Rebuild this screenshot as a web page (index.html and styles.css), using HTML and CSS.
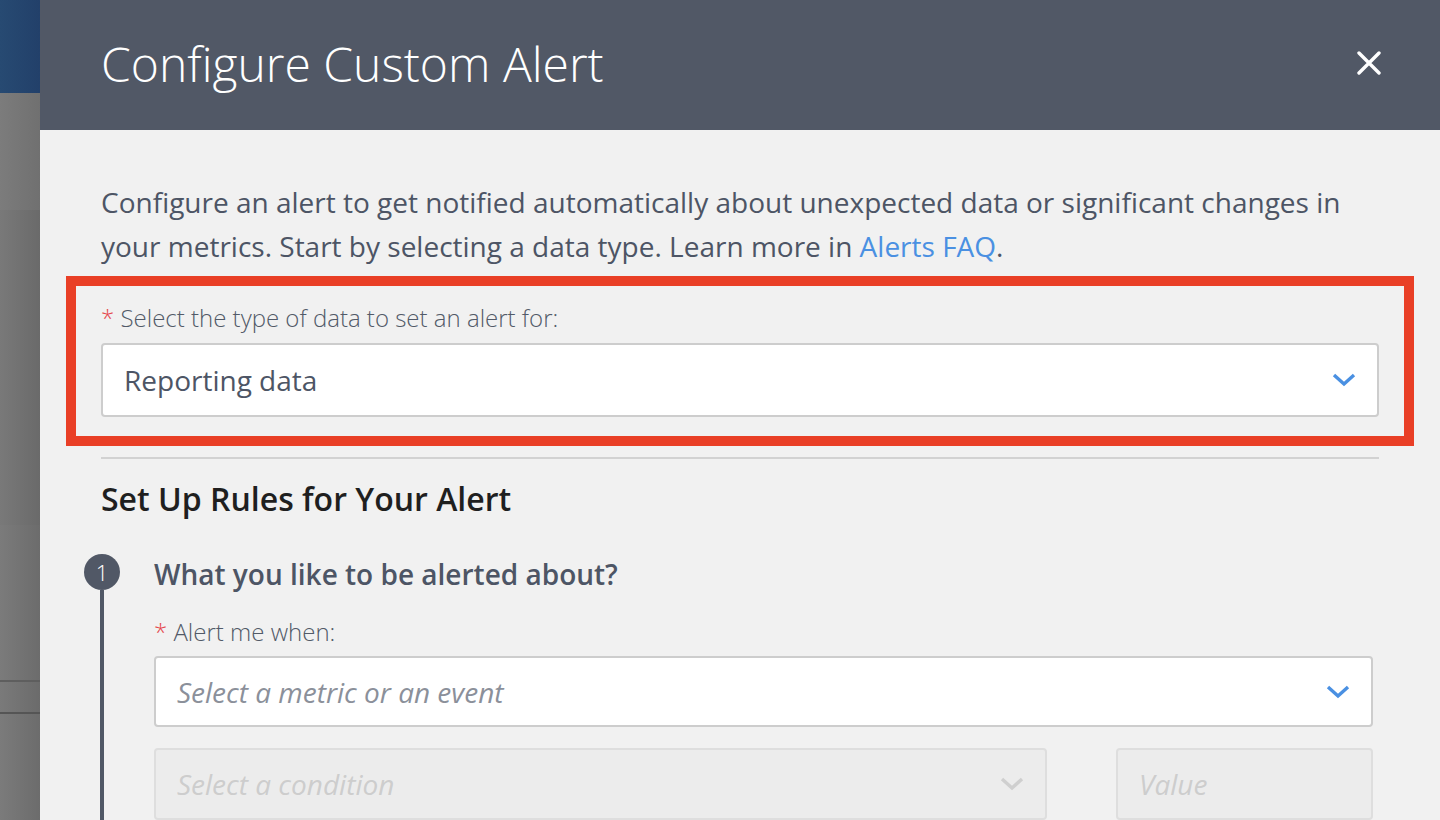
FILE: index.html
```html
<!DOCTYPE html>
<html>
<head>
<meta charset="utf-8">
<link rel="stylesheet" href="styles.css">
</head>
<body>
<div class="page">
  <div class="backdrop">
    <div class="bd-top"></div>
    <div class="bd-a"></div>
    <div class="bd-b"></div>
    <div class="bd-c"></div>
    <div class="bd-d"></div>
    <div class="bd-e"></div>
  </div>
  <div class="modal">
    <div class="modal-header">
      <h1 class="modal-title">Configure Custom Alert</h1>
      <button class="close-btn" aria-label="Close">
        <svg width="24" height="24" viewBox="0 0 24 24"><path d="M2 2 L22 22 M22 2 L2 22" stroke="#fff" stroke-width="3.4" stroke-linecap="round" fill="none"/></svg>
      </button>
    </div>
    <div class="modal-body">
      <p class="intro">Configure an alert to get notified automatically about unexpected data or significant changes in your metrics. Start by selecting a data type. Learn more in <a class="link" href="#">Alerts FAQ</a>.</p>

      <div class="field-group highlighted">
        <label class="field-label"><span class="req">*</span> Select the type of data to set an alert for:</label>
        <div class="select big">
          <span class="select-value">Reporting data</span>
          <svg class="chev" width="24" height="14" viewBox="0 0 24 14"><path d="M2 2 L12 11 L22 2" stroke="#4a90e2" stroke-width="3.4" fill="none"/></svg>
        </div>
      </div>

      <div class="divider"></div>

      <h2 class="section-title">Set Up Rules for Your Alert</h2>

      <div class="step">
        <div class="step-rail">
          <div class="step-num">1</div>
          <div class="step-line"></div>
        </div>
        <div class="step-content">
          <h3 class="step-title">What you like to be alerted about?</h3>
          <label class="field-label"><span class="req">*</span> Alert me when:</label>
          <div class="select metric">
            <span class="select-placeholder">Select a metric or an event</span>
            <svg class="chev" width="24" height="14" viewBox="0 0 24 14"><path d="M2 2 L12 11 L22 2" stroke="#4a90e2" stroke-width="3.4" fill="none"/></svg>
          </div>
          <div class="cond-row">
            <div class="select disabled cond">
              <span class="select-placeholder">Select a condition</span>
              <svg class="chev" width="24" height="14" viewBox="0 0 24 14"><path d="M2 2 L12 11 L22 2" stroke="#cfcfcf" stroke-width="3.4" fill="none"/></svg>
            </div>
            <div class="select disabled value">
              <span class="select-placeholder">Value</span>
            </div>
          </div>
        </div>
      </div>
    </div>
  </div>
</div>
</body>
</html>
```

FILE: styles.css
```css
* { box-sizing: border-box; }
html, body {
  margin: 0;
  padding: 0;
  width: 1440px;
  height: 820px;
  overflow: hidden;
  font-family: "Open Sans", "Liberation Sans", sans-serif;
}
.page {
  display: flex;
  width: 1440px;
  height: 820px;
}
.backdrop {
  width: 40px;
  flex: none;
  display: flex;
  flex-direction: column;
}
.bd-top { height: 93px; flex: none; background: linear-gradient(90deg, #274a72, #22406a); }
.bd-a { height: 117px; flex: none; background: linear-gradient(90deg, #7c7c7c, #707070); }
.bd-b { height: 315px; flex: none; background: linear-gradient(90deg, #797979, #6a6a6a); }
.bd-c { height: 155px; flex: none; background: linear-gradient(90deg, #7b7b7b, #6c6c6c); }
.bd-d { height: 32px; flex: none; background: linear-gradient(90deg, #7a7a7a, #6b6b6b); border-top: 2px solid #5e5e5e; }
.bd-e { flex: 1; background: linear-gradient(90deg, #7b7b7b, #6c6c6c); border-top: 2px solid #555; }

.modal {
  flex: 1;
  background: #f1f1f1;
  display: flex;
  flex-direction: column;
  overflow: hidden;
}
.modal-header {
  flex: none;
  height: 130px;
  background: #515866;
  display: flex;
  align-items: center;
  justify-content: space-between;
  padding: 0 59px 4px 61px;
}
.modal-title {
  margin: 0;
  font-weight: 300;
  font-size: 48px;
  color: #ffffff;
}
.close-btn {
  background: none;
  border: 0;
  padding: 0;
  width: 24px;
  height: 24px;
  display: flex;
  cursor: pointer;
}
.modal-body {
  flex: none;
  padding: 50px 61px 0 61px;
}
.intro {
  margin: 0;
  font-size: 28px;
  line-height: 44px;
  color: #4d5565;
}
.link { color: #4a90e2; text-decoration: none; }

.field-group {
  position: relative;
  margin-top: 35px;
}
.highlighted::before {
  content: "";
  position: absolute;
  left: -35px;
  right: -35px;
  top: -27px;
  bottom: -29px;
  border: 10px solid #e93f26;
  pointer-events: none;
}
.field-label {
  display: block;
  font-size: 24px;
  line-height: 30px;
  font-weight: 300;
  color: #525a68;
}
.req { color: #e5484d; }
.select {
  margin-top: 10px;
  background: #fff;
  border: 2px solid #cdcdcd;
  border-radius: 4px;
  display: flex;
  align-items: center;
  justify-content: space-between;
  padding: 0 21px 0 21px;
}
.select.big { height: 74px; }
.select-value { font-size: 28px; color: #4d5565; }
.select-placeholder { font-size: 28px; font-style: italic; color: #8b909a; }
.chev { flex: none; }

.divider {
  height: 2px;
  background: #d2d2d2;
  margin-top: 40px;
}
.section-title {
  margin: 20px 0 0 0;
  font-size: 32px;
  line-height: 40px;
  font-weight: 600;
  color: #1f1f1f;
}
.step {
  display: flex;
  margin-top: 37px;
}
.step-rail {
  width: 53px;
  flex: none;
  display: flex;
  flex-direction: column;
  align-items: flex-start;
}
.step-num {
  width: 36px;
  height: 36px;
  margin-left: -17px;
  margin-top: -2px;
  border-radius: 50%;
  background: #515866;
  color: #fff;
  font-size: 22px;
  font-weight: 300;
  display: flex;
  align-items: center;
  justify-content: center;
}
.step-line {
  width: 4px;
  margin-left: -1px;
  flex: 1;
  background: #515866;
}
.step-content {
  flex: 1;
  padding-right: 6px;
}
.step-title {
  margin: 0;
  font-size: 28px;
  line-height: 36px;
  font-weight: 600;
  color: #4d5565;
}
.step-content .field-label { margin-top: 25px; }
.select.metric { height: 71px; margin-top: 9px; }
.cond-row {
  display: flex;
  justify-content: space-between;
  margin-top: 21px;
  padding-bottom: 40px;
}
.select.disabled {
  background: #ececec;
  border-color: #dedede;
  margin-top: 0;
  height: 72px;
}
.select.disabled .select-placeholder { color: #cdcdcd; }
.select.cond { width: 893px; }
.select.value { width: 257px; }
```
